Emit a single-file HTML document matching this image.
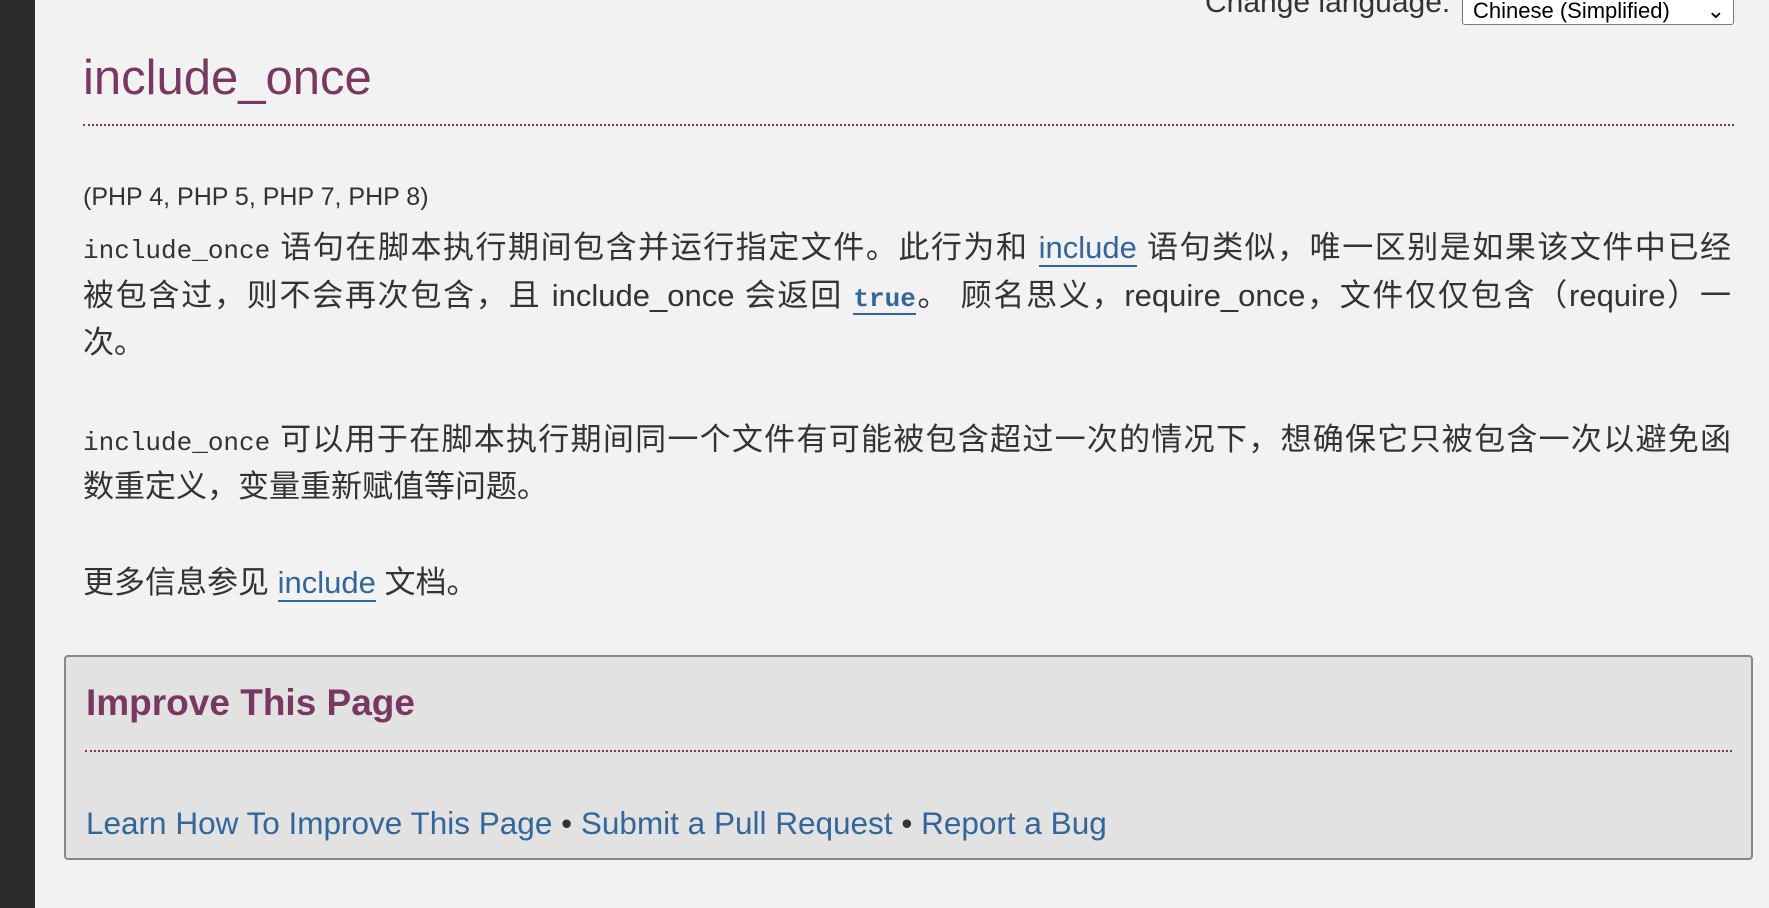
<!DOCTYPE html>
<html><head><meta charset="utf-8"><style>
html,body{margin:0;padding:0;width:1769px;height:908px;overflow:hidden;background:#f2f2f2;}
body{font-family:"Liberation Sans","Noto Sans CJK SC",sans-serif;color:#333;position:relative;}
.side{position:absolute;left:0;top:0;width:35px;height:908px;background:#2b2b2b;}
.ab{position:absolute;white-space:nowrap;}
.ln{position:absolute;left:83px;width:1648px;font-size:31px;line-height:40px;white-space:nowrap;}
.j{text-align:justify;text-align-last:justify;}
code{font-family:"Liberation Mono",monospace;font-size:26px;}
a{color:#336699;text-decoration:none;border-bottom:2px solid #336699;}
.dot{position:absolute;border-top:2px dotted #793862;height:0;}
</style></head><body>
<div class="side"></div>
<div class="ab" style="left:1205px;top:-14px;font-size:30px;color:#333;">Change language:</div>
<div class="ab" style="left:1462px;top:-6px;width:272px;height:31px;border:1px solid #777;border-radius:3px;background:#fff;font-size:22px;line-height:31px;color:#000;box-sizing:border-box;padding-left:10px;">Chinese (Simplified)<span style="position:absolute;right:8px;top:0;">&#8964;</span></div>
<div class="ab" style="left:83px;top:50px;font-size:49px;color:#793862;">include_once</div>
<div class="dot" style="left:83px;top:124px;width:1651px;"></div>
<div class="ab" style="left:83px;top:183px;font-size:25px;">(PHP 4, PHP 5, PHP 7, PHP 8)</div>
<div class="ln j" style="top:228px;"><code>include_once</code> 语句在脚本执行期间包含并运行指定文件。此行为和 <a>include</a> 语句类似，唯一区别是如果该文件中已经</div>
<div class="ln j" style="top:276px;">被包含过，则不会再次包含，且 include_once 会返回 <a><code style="font-weight:bold">true</code></a>。 顾名思义，require_once，文件仅仅包含（require）一</div>
<div class="ln" style="top:323px;">次。</div>
<div class="ln j" style="top:420px;"><code>include_once</code> 可以用于在脚本执行期间同一个文件有可能被包含超过一次的情况下，想确保它只被包含一次以避免函</div>
<div class="ln" style="top:467px;">数重定义，变量重新赋值等问题。</div>
<div class="ln" style="top:563px;">更多信息参见 <a>include</a> 文档。</div>
<div class="ab" style="left:64px;top:655px;width:1689px;height:205px;background:#e2e2e2;border:2px solid #888;border-radius:4px;box-sizing:border-box;"></div>
<div class="ab" style="left:86px;top:682px;font-size:37px;font-weight:bold;color:#793862;">Improve This Page</div>
<div class="dot" style="left:85px;top:750px;width:1647px;"></div>
<div class="ab" style="left:86px;top:805px;font-size:31.5px;color:#333;"><span style="color:#336699">Learn How To Improve This Page</span> • <span style="color:#336699">Submit a Pull Request</span> • <span style="color:#336699">Report a Bug</span></div>
</body></html>
